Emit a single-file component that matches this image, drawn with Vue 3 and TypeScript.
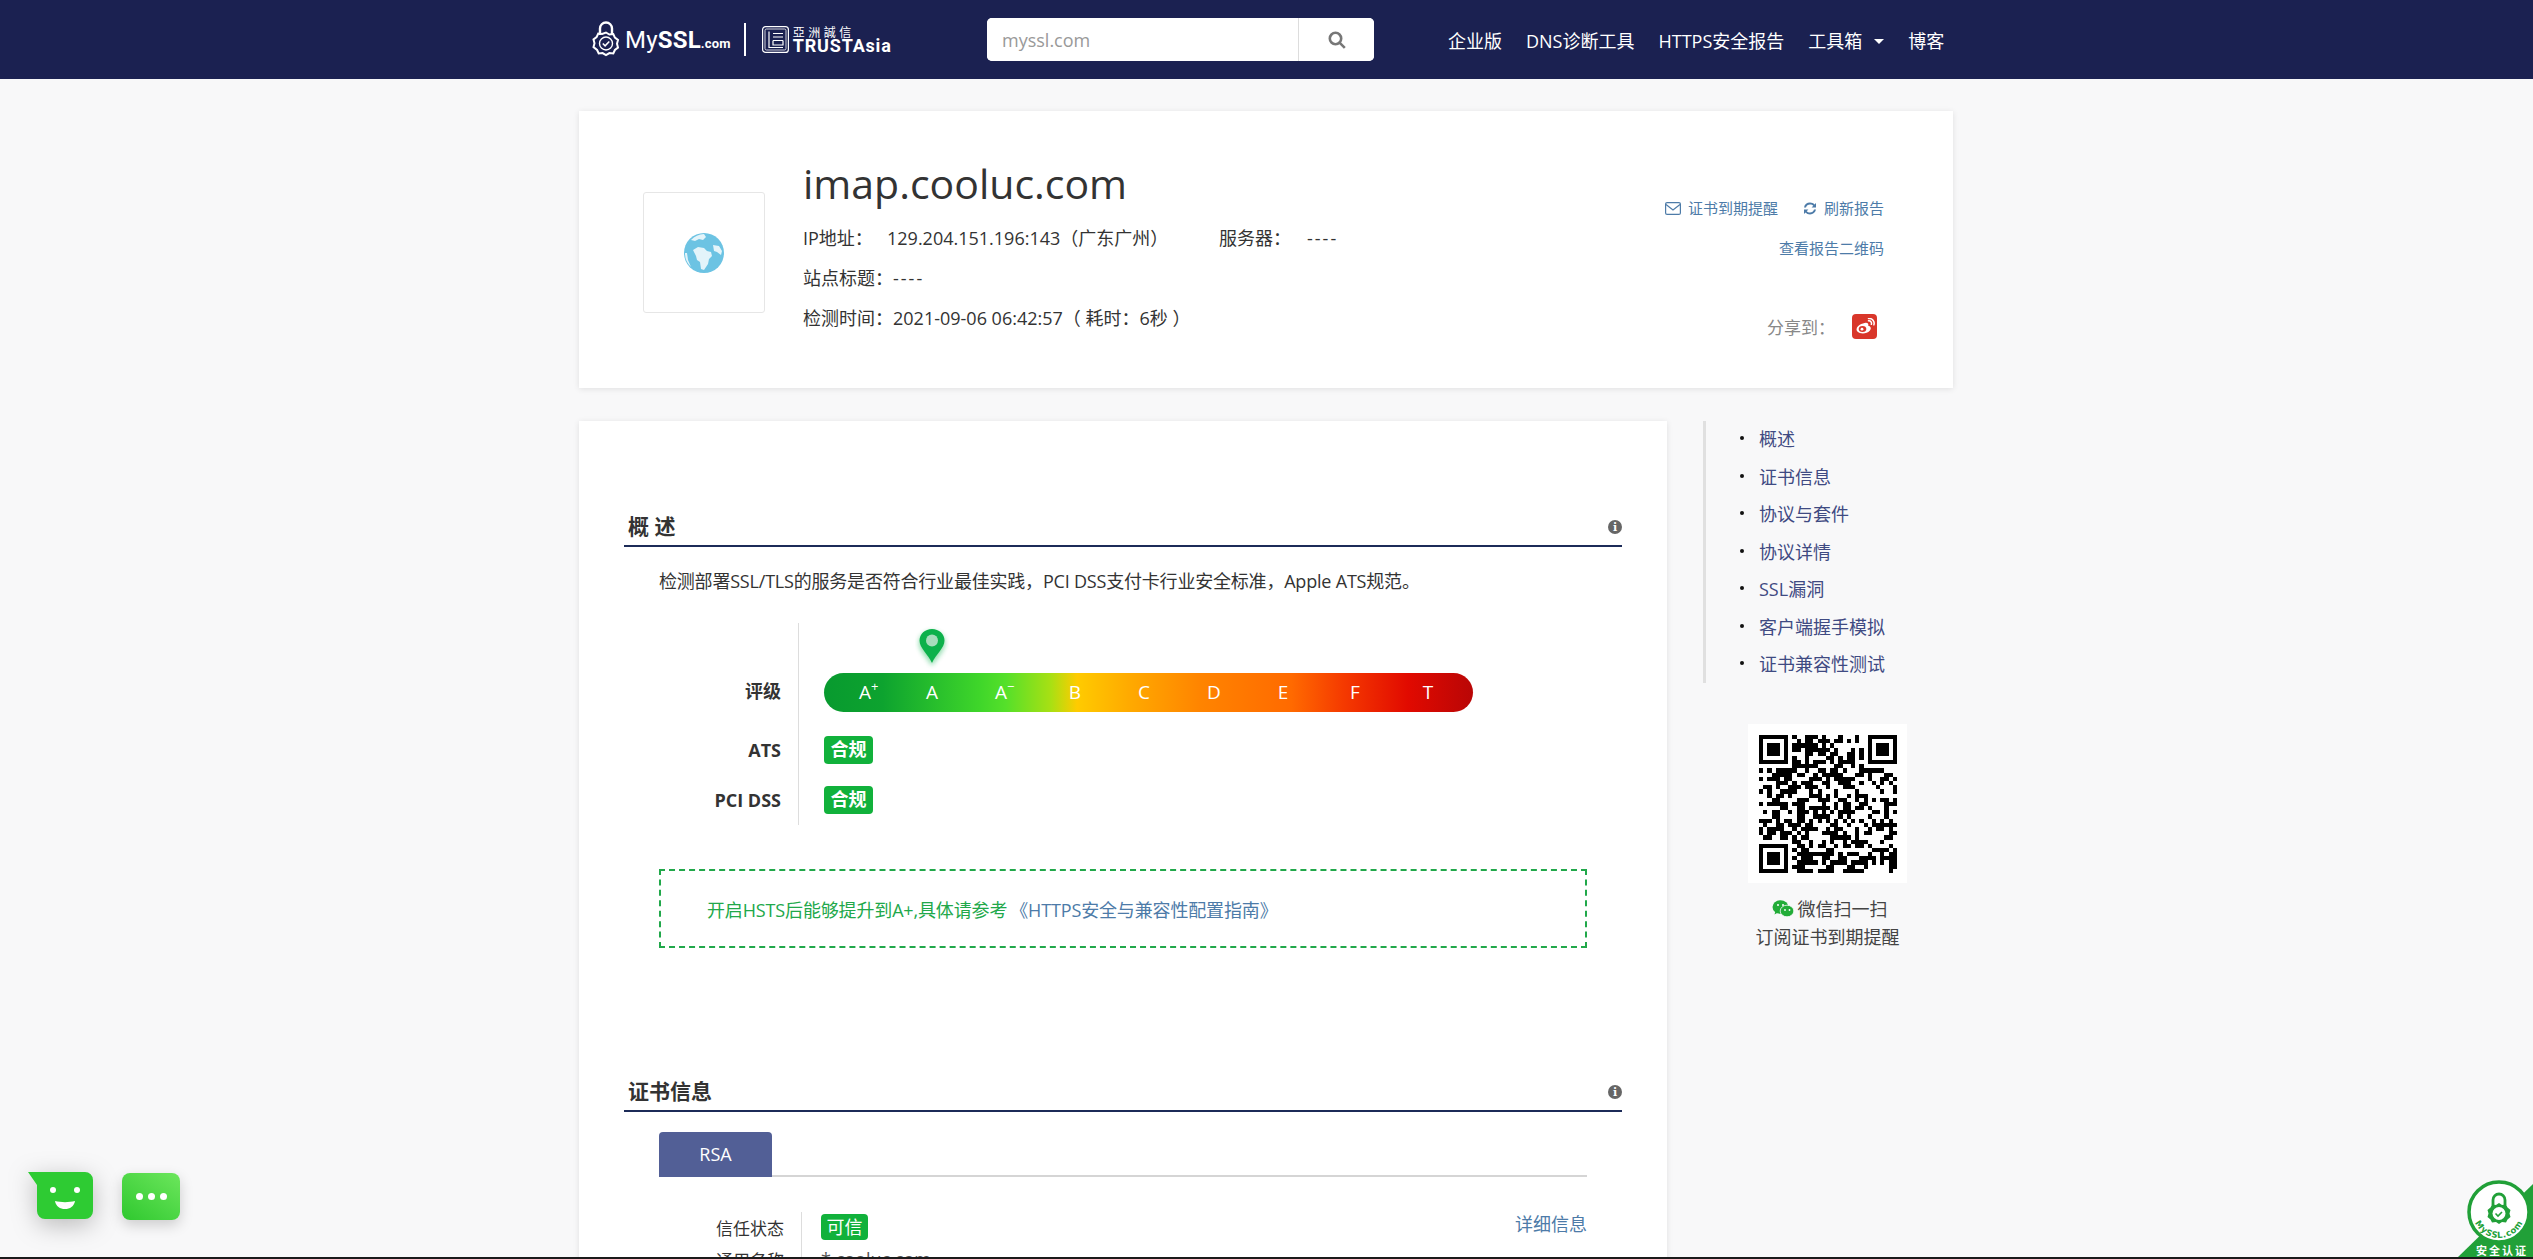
<script setup lang="ts">
import { computed } from 'vue'

const navItems = ['企业版', 'DNS诊断工具', 'HTTPS安全报告']
const sideItems = ['概述', '证书信息', '协议与套件', '协议详情', 'SSL漏洞', '客户端握手模拟', '证书兼容性测试']
const grades = [
  { label: 'A', sup: '+', x: 41 },
  { label: 'A', sup: '', x: 108 },
  { label: 'A', sup: '−', x: 177 },
  { label: 'B', sup: '', x: 251 },
  { label: 'C', sup: '', x: 320 },
  { label: 'D', sup: '', x: 390 },
  { label: 'E', sup: '', x: 459 },
  { label: 'F', sup: '', x: 531 },
  { label: 'T', sup: '', x: 604 }
]

// not the real code, just the same look: finder squares + seeded noise
const qrPath = computed(() => {
  const n = 33
  let seed = 20210906
  const next = () => {
    seed = (seed * 1103515245 + 12345) & 0x7fffffff
    return (seed >> 16) & 1
  }
  const inFinder = (x: number, y: number) =>
    (x < 8 && y < 8) || (x >= n - 8 && y < 8) || (x < 8 && y >= n - 8)
  let d = ''
  for (let y = 0; y < n; y++) {
    for (let x = 0; x < n; x++) {
      const on = next()
      if (!inFinder(x, y) && on) d += `M${x} ${y}h1v1h-1z`
    }
  }
  for (const [fx, fy] of [[0, 0], [n - 7, 0], [0, n - 7]]) {
    d += `M${fx} ${fy}h7v7h-7zM${fx + 1} ${fy + 1}v5h5v-5zM${fx + 2} ${fy + 2}h3v3h-3z`
  }
  return d
})
</script>

<template>
  <div class="page">
    <header class="topbar">
      <div class="topbar-inner">
        <a class="logo">
          <svg class="logo-lock" viewBox="0 0 28 37" fill="none" stroke="#fff">
            <path d="M8 14V7.5a6 6 0 0 1 12 0V14" stroke-width="2.4" />
            <path d="M14 11.5l3.4 2 3.9-.4 1.6 3.5 3.1 2.4-1 3.8 1 3.8-3.1 2.4-1.6 3.5-3.900-.4-3.400 2-3.400-2-3.900.4-1.600-3.500L1.500 26.100l1-3.800-1-3.800 3.100-2.400 1.600-3.500 3.900.4z" stroke-width="2" />
            <circle cx="14" cy="22.500" r="6.500" stroke-width="1.400" />
            <path d="M10.800 22.500l2.300 2.300 4.200-4.300" stroke-width="1.600" />
          </svg>
          <span class="logo-name">My<b>SSL</b><small>.com</small></span>
          <i class="logo-sep"></i>
          <svg class="logo-mark" viewBox="0 0 27 27" fill="none" stroke="#fff" stroke-width="1.200">
            <rect x="0.600" y="0.600" width="25.800" height="25.800" rx="3" />
            <rect x="3" y="3" width="21" height="21" rx="1.500" stroke-width="0.800" />
            <path d="M7 5.500v16h14M11 7.500h10M11 11h10M11 14.500h10M11 14.500v4.500h10v-4.500" />
          </svg>
          <span class="logo-ta">
            <span class="logo-ta-cn">亞洲誠信</span>
            <span class="logo-ta-en">TRUSTAsia</span>
          </span>
        </a>
        <form class="search" @submit.prevent>
          <input class="search-input" placeholder="myssl.com" />
          <button class="search-btn" type="button" aria-label="search">
            <svg width="18" height="18" viewBox="0 0 18 18" fill="none" stroke="#777" stroke-width="2.600">
              <circle cx="7.500" cy="7.500" r="5.700" />
              <path d="M11.800 11.800l5 5" />
            </svg>
          </button>
        </form>
        <nav class="nav">
          <a v-for="item in navItems" :key="item">{{ item }}</a>
          <a class="nav-drop">工具箱<i class="caret"></i></a>
          <a>博客</a>
        </nav>
      </div>
    </header>

    <div class="container">
      <section class="site-card">
        <div class="favicon">
          <svg width="40" height="40" viewBox="0 0 40 40">
            <circle cx="20" cy="20" r="20" fill="#6cc3e3" />
            <path d="M20 1a19 19 0 0 0-13 6l4 1 4-2 4 1 3-3zM9 17l5-3 6 1 3 3 4 1 1 4-3 3-1 5-4 6-3-1-1-7-3-2-1-4zM29 12l6 1 3 5-1 4-4-3-3-1zM1 20a19 19 0 0 0 6 14l-3-7-1-7z" fill="#e3f4fa" />
            <path d="M3 30a20 20 0 0 0 17 10 20 20 0 0 1-17-10z" fill="#fff" />
          </svg>
        </div>
        <div class="site-info">
          <h1 class="site-host">imap.cooluc.com</h1>
          <p class="site-row">
            <span class="w-ip">IP地址：</span><span class="w-addr">129.204.151.196:143（广东广州）</span><span class="w-srv">服务器：</span><span class="dash">----</span>
          </p>
          <p class="site-row"><span class="w-title">站点标题：</span><span class="dash">----</span></p>
          <p class="site-row"><span class="w-title">检测时间：</span><span>2021-09-06 06:42:57（ 耗时：6秒 ）</span></p>
        </div>
        <div class="site-actions">
          <div class="action-row">
            <a class="action">
              <svg width="16" height="13" viewBox="0 0 16 13" fill="none" stroke="#4d7ba8" stroke-width="1.200">
                <rect x="0.600" y="0.600" width="14.800" height="11.800" rx="1.500" />
                <path d="M1 2.500l7 5.500 7-5.500" />
              </svg>
              证书到期提醒
            </a>
            <a class="action">
              <svg width="14" height="13" viewBox="0 0 14 13" fill="#4d7ba8">
                <path d="M1 5.400C1.500 2.400 4 .5 7 .5c1.800 0 3.400.7 4.500 1.900L13 1v4.400H8.600l1.700-1.700C9.600 2.900 8.400 2.400 7 2.400c-2 0-3.500 1.200-4 3zM13 7.600c-.5 3-3 4.900-6 4.900-1.800 0-3.400-.7-4.500-1.900L1 12V7.600h4.400L3.700 9.300c.7.800 1.900 1.300 3.300 1.300 2 0 3.500-1.200 4-3z" />
              </svg>
              刷新报告
            </a>
          </div>
          <a class="action qr-link">查看报告二维码</a>
          <div class="share">
            <span>分享到：</span>
            <span class="weibo">
              <svg width="20" height="17" viewBox="0 0 20 17">
                <path d="M8 5.500c3.800-1.500 6-.2 5.200 2.300 3 .8 3.300 3 1.500 5C12.500 15.300 8 16 4.800 15 1.800 14 .8 11.800 2 9.500 3 7.700 5.500 6 8 5.500z" fill="#fff" />
                <ellipse cx="7.500" cy="11" rx="3.800" ry="2.900" fill="#d9362a" />
                <circle cx="7" cy="11.200" r="1.400" fill="#fff" />
                <path d="M13.500 2.800c2-.3 3.500 1.500 2.900 3.500M13.500.5c3.800-.5 6.500 2.800 5.400 6.300" fill="none" stroke="#fff" stroke-width="1.500" stroke-linecap="round" />
              </svg>
            </span>
          </div>
        </div>
      </section>

      <div class="columns">
        <main class="report">
          <div class="sec-head">
            <h2>概 述</h2>
            <i class="info-dot">i</i>
          </div>
          <p class="sec-desc">检测部署SSL/TLS的服务是否符合行业最佳实践，PCI DSS支付卡行业安全标准，Apple ATS规范。</p>

          <div class="grade-row grade-row-bar">
            <div class="grade-label">评级</div>
            <div class="grade-value">
              <div class="grade-bar">
                <span v-for="g in grades" :key="g.x" class="grade-tick" :style="{ left: g.x + 'px' }">{{ g.label }}<sup v-if="g.sup">{{ g.sup }}</sup></span>
                <svg class="grade-pin" width="34" height="46" viewBox="0 0 34 46">
                  <defs>
                    <filter id="pinGlow" x="-40%" y="-40%" width="180%" height="180%">
                      <feGaussianBlur stdDeviation="2.500" />
                    </filter>
                  </defs>
                  <path d="M17 7c7.500 0 13 5 13 12 0 8-8 14-13 23-5-9-13-15-13-23 0-7 5.500-12 13-12z" fill="#0db14b" opacity="0.45" filter="url(#pinGlow)" />
                  <path d="M17 5c7 0 12.500 5 12.500 11.500C29.500 24 21 30 17 39 13 30 4.500 24 4.500 16.500 4.500 10 10 5 17 5z" fill="#0db14b" />
                  <circle cx="17" cy="16.500" r="6" fill="#a8dcbc" />
                </svg>
              </div>
            </div>
          </div>
          <div class="grade-row grade-row-ats">
            <div class="grade-label">ATS</div>
            <div class="grade-value"><span class="pass">合规</span></div>
          </div>
          <div class="grade-row grade-row-pci">
            <div class="grade-label">PCI DSS</div>
            <div class="grade-value"><span class="pass">合规</span></div>
          </div>

          <div class="tip">
            <span>开启HSTS后能够提升到A+,具体请参考</span>
            <a>《HTTPS安全与兼容性配置指南》</a>
          </div>

          <div class="sec-head sec-head-cert">
            <h2>证书信息</h2>
            <i class="info-dot">i</i>
          </div>
          <div class="tabs"><span class="tab">RSA</span></div>
          <div class="cert-row">
            <div class="cert-label">信任状态</div>
            <div class="cert-value">
              <span class="trust">可信</span>
              <a class="cert-more">详细信息</a>
            </div>
          </div>
          <div class="cert-row">
            <div class="cert-label">通用名称</div>
            <div class="cert-value cert-name">*.cooluc.com</div>
          </div>
        </main>

        <aside class="side">
          <ul class="side-nav">
            <li v-for="item in sideItems" :key="item"><a>{{ item }}</a></li>
          </ul>
          <div class="qr-box">
            <svg width="138" height="138" viewBox="0 0 33 33" shape-rendering="crispEdges">
              <path :d="qrPath" fill="#000" fill-rule="evenodd" />
            </svg>
          </div>
          <p class="qr-line qr-line-first">
            <svg width="22" height="18" viewBox="0 0 22 18">
              <ellipse cx="8.500" cy="7" rx="8" ry="6.800" fill="#22ac38" />
              <path d="M3.500 11l-1 3.500L7 12z" fill="#22ac38" />
              <ellipse cx="15" cy="11" rx="6.800" ry="5.800" fill="#22ac38" stroke="#f8f8f9" stroke-width="0.800" />
              <circle cx="6" cy="5" r="1" fill="#fff" />
              <circle cx="11" cy="5" r="1" fill="#fff" />
              <circle cx="13" cy="10" r="0.900" fill="#fff" />
              <circle cx="17.500" cy="10" r="0.900" fill="#fff" />
            </svg>
            微信扫一扫
          </p>
          <p class="qr-line">订阅证书到期提醒</p>
        </aside>
      </div>
    </div>

    <button class="chat-smile" aria-label="chat">
      <svg width="66" height="48" viewBox="0 0 66 48">
        <path d="M0 0h57a8 8 0 0 1 8 8v31a8 8 0 0 1-8 8H17a8 8 0 0 1-8-8V13z" fill="#2ecb33" />
        <circle cx="25" cy="18" r="3" fill="#fff" />
        <circle cx="49" cy="18" r="3" fill="#fff" />
        <path d="M27 29c6 1.500 14 1.500 20 0-1 5.500-5 8-10 8s-9-2.500-10-8z" fill="#fff" />
      </svg>
    </button>
    <button class="chat-more" aria-label="more"><i></i><i></i><i></i></button>

    <div class="seal">
      <svg width="76" height="74" viewBox="0 0 76 74">
        <path d="M0 74 76 0v74z" fill="#21a038" />
        <circle cx="42" cy="28" r="30" fill="#fff" stroke="#21a038" stroke-width="3.500" />
        <path d="M36 21v-5a6 6 0 0 1 12 0v5" fill="none" stroke="#21a038" stroke-width="2.800" />
        <path d="M42 19l3 2 4-.4 1.500 3 3 2.400-1 3.500 1 3.500-3 2.400-1.500 3-4-.4-3 2-3-2-4 .4-1.500-3-3-2.400 1-3.500-1-3.500 3-2.400 1.500-3 4 .4z" fill="#21a038" />
        <circle cx="42" cy="29.500" r="6.500" fill="#fff" />
        <path d="M38.500 29.500l2.500 2.500 4-4" fill="none" stroke="#21a038" stroke-width="1.600" />
        <defs><path id="sealArc" d="M16 28a26 26 0 0 0 52 0" /></defs>
        <text class="seal-arc"><textPath href="#sealArc" startOffset="50%" text-anchor="middle">MySSL.com</textPath></text>
        <text class="seal-cn" x="45" y="71" text-anchor="middle">安全认证</text>
      </svg>
    </div>
    <i class="edge"></i>
  </div>
</template>

<style>
body {
  background: #f8f8f9;
}
</style>

<style scoped>
.page {
  position: relative;
  height: 1259px;
  overflow: hidden;
  background: #f8f8f9;
  color: #333;
  font-family: 'Open Sans', 'Noto Sans CJK SC', sans-serif;
  font-size: 18px;
}

.topbar {
  height: 79px;
  background: #1b2151;
}

.topbar-inner {
  display: flex;
  align-items: center;
  width: 1374px;
  height: 79px;
  margin-left: 579px;
}

.logo {
  display: flex;
  align-items: center;
  flex: none;
  width: 408px;
  padding-left: 13px;
  box-sizing: border-box;
  color: #fff;
}

.logo-lock {
  width: 28px;
  height: 37px;
}

.logo-name {
  margin-left: 5px;
  font-family: 'Roboto', sans-serif;
  font-size: 24px;
  letter-spacing: 0.2px;
}

.logo-name b {
  font-weight: 700;
}

.logo-name small {
  font-size: 13px;
  font-weight: 700;
}

.logo-sep {
  width: 2px;
  height: 33px;
  margin: 0 16px 0 13px;
  background: #fff;
}

.logo-mark {
  width: 27px;
  height: 27px;
}

.logo-ta {
  display: flex;
  flex-direction: column;
  margin-left: 4px;
  line-height: 1;
}

.logo-ta-cn {
  font-size: 12px;
  letter-spacing: 3.500px;
  line-height: 13px;
}

.logo-ta-en {
  font-family: 'Roboto', sans-serif;
  font-size: 18px;
  font-weight: 700;
  line-height: 14px;
  letter-spacing: 0.800px;
}

.search {
  display: flex;
  flex: none;
  width: 387px;
  height: 43px;
  margin-right: 74px;
  border-radius: 5px;
  overflow: hidden;
  background: #fff;
}

.search-input {
  flex: 1;
  min-width: 0;
  padding: 0 15px;
  border: 0;
  outline: 0;
  border-right: 1px solid #ddd;
  font: inherit;
  font-size: 18px;
  color: #333;
}

.search-input::placeholder {
  color: #999;
}

.search-btn {
  display: flex;
  align-items: center;
  justify-content: center;
  width: 75px;
  padding: 0;
  border: 0;
  background: #fff;
}

.nav {
  display: flex;
  align-items: center;
  gap: 24px;
  color: #fff;
  white-space: nowrap;
}

.nav-drop {
  display: flex;
  align-items: center;
}

.caret {
  width: 0;
  height: 0;
  margin-left: 12px;
  margin-top: 3px;
  border: 5px solid transparent;
  border-top-color: #fff;
  border-bottom: 0;
}

.container {
  width: 1374px;
  margin: 32px 0 0 579px;
}

.site-card {
  display: flex;
  height: 277px;
  background: #fff;
  box-shadow: 0 1px 6px rgba(0, 0, 0, 0.1);
}

.favicon {
  display: flex;
  align-items: center;
  justify-content: center;
  flex: none;
  width: 122px;
  height: 121px;
  margin: 81px 38px 0 64px;
  box-sizing: border-box;
  border: 1px solid #e6e6e6;
  border-radius: 3px;
}

.site-info {
  flex: 1;
  padding-top: 39px;
}

.site-host {
  margin: 0 0 2px;
  font-size: 41px;
  font-weight: 400;
  line-height: 66px;
  color: #333;
}

.site-row {
  margin: 0;
  line-height: 40px;
  white-space: nowrap;
}

.site-row span {
  display: inline-block;
}

.w-ip {
  width: 84px;
}

.w-addr {
  width: 332px;
}

.w-srv {
  width: 88px;
}

.w-title {
  width: 90px;
}

.dash {
  letter-spacing: 2px;
}

.site-actions {
  display: flex;
  flex-direction: column;
  align-items: flex-end;
  flex: none;
  padding: 82px 69px 0 0;
}

.action-row {
  display: flex;
  gap: 25px;
}

.action {
  display: flex;
  align-items: center;
  gap: 7px;
  font-size: 15px;
  line-height: 30px;
  color: #4d7ba8;
}

.qr-link {
  margin-top: 10px;
}

.share {
  display: flex;
  align-items: center;
  margin-top: 51px;
  margin-right: 7px;
  font-size: 17px;
  color: #888;
}

.weibo {
  display: flex;
  align-items: center;
  justify-content: center;
  width: 25px;
  height: 25px;
  margin-left: 17px;
  border-radius: 4px;
  background: #d9362a;
}

.columns {
  display: flex;
  margin-top: 33px;
}

.report {
  flex: none;
  width: 1088px;
  height: 900px;
  padding: 91px 45px 0;
  box-sizing: border-box;
  background: #fff;
  box-shadow: 0 1px 6px rgba(0, 0, 0, 0.1);
}

.sec-head {
  display: flex;
  align-items: center;
  justify-content: space-between;
  height: 30px;
  padding: 0 0 3px 4px;
  border-bottom: 2px solid #1c2b58;
}

.sec-head h2 {
  margin: 0 0 2px;
  font-size: 21px;
  font-weight: 700;
  line-height: 28px;
  color: #333;
}

.sec-head-cert {
  margin-top: 129px;
}

.info-dot {
  display: flex;
  align-items: center;
  justify-content: center;
  width: 14px;
  height: 14px;
  border-radius: 50%;
  background: #666;
  color: #fff;
  font-family: 'DejaVu Serif', serif;
  font-size: 11px;
  font-style: normal;
  font-weight: 700;
}

.sec-desc {
  margin: 19px 0 27px 35px;
  line-height: 30px;
  letter-spacing: -0.2px;
  white-space: nowrap;
}

.grade-row {
  display: grid;
  grid-template-columns: 174px 1fr;
}

.grade-label {
  padding-right: 17px;
  font-weight: 700;
  font-size: 18px;
  text-align: right;
  color: #333;
}

.grade-value {
  padding-left: 25px;
  border-left: 1px solid #ddd;
}

.grade-row-bar .grade-label {
  padding-top: 49px;
  line-height: 39px;
}

.grade-row-bar .grade-value {
  padding-top: 50px;
  padding-bottom: 24px;
}

.grade-row-ats .grade-label,
.grade-row-pci .grade-label {
  line-height: 28px;
}

.grade-row-ats .grade-value {
  padding-bottom: 22px;
}

.grade-row-pci .grade-value {
  padding-bottom: 11px;
}

.grade-bar {
  position: relative;
  width: 649px;
  height: 39px;
  border-radius: 20px;
  background: linear-gradient(90deg, #089a2f 0%, #0da32f 9%, #3fd62a 24%, #55e02a 28%, #a9e013 35%, #ffcb00 39%, #ffaa00 47%, #ff8400 58%, #ff6a00 72%, #f53a00 80%, #e10a00 90%, #b90606 100%);
}

.grade-tick {
  position: absolute;
  top: 0;
  transform: translateX(-50%);
  font-size: 19px;
  line-height: 39px;
  color: #fff;
}

.grade-tick sup {
  position: absolute;
  top: -6px;
  font-size: 13px;
  line-height: 39px;
}

.grade-pin {
  position: absolute;
  left: 91px;
  top: -49px;
}

.pass {
  display: block;
  width: 49px;
  height: 28px;
  border-radius: 4px;
  background: #11b13b;
  color: #fff;
  font-size: 18px;
  font-weight: 700;
  line-height: 27px;
  text-align: center;
}

.tip {
  display: flex;
  align-items: center;
  gap: 3px;
  width: 928px;
  height: 79px;
  margin: 44px 0 0 35px;
  padding-left: 46px;
  box-sizing: border-box;
  border: 2px dashed #21a84a;
  color: #21a84a;
  letter-spacing: -0.15px;
  white-space: nowrap;
}

.tip a {
  color: #4d7ba8;
}

.tabs {
  width: 928px;
  height: 43px;
  margin: 20px 0 0 35px;
  border-bottom: 2px solid #d5d5d5;
}

.tab {
  display: block;
  width: 113px;
  height: 45px;
  border-radius: 4px 4px 0 0;
  background: #525f96;
  color: #fff;
  line-height: 44px;
  text-align: center;
}

.cert-row {
  display: grid;
  grid-template-columns: 177px 786px;
  height: 32px;
}

.tabs + .cert-row {
  margin-top: 35px;
}

.cert-label {
  padding-right: 17px;
  padding-top: 2px;
  font-size: 17px;
  line-height: 30px;
  text-align: right;
  color: #333;
}

.cert-value {
  display: flex;
  align-items: flex-start;
  justify-content: space-between;
  padding-left: 19px;
  border-left: 1px solid #ddd;
}

.trust {
  width: 47px;
  height: 26px;
  margin-top: 2px;
  border-radius: 4px;
  background: #11b13b;
  color: #fff;
  line-height: 26px;
  text-align: center;
}

.cert-more {
  color: #4d7ba8;
  line-height: 24px;
}

.cert-name {
  color: #555;
  line-height: 30px;
}

.side {
  flex: none;
  width: 250px;
  margin-left: 36px;
}

.side-nav {
  margin: 0;
  padding: 0 0 0 34px;
  border-left: 3px solid #e0e0e0;
  list-style: none;
  height: 262px;
  box-sizing: border-box;
}

.side-nav li {
  position: relative;
  height: 37.500px;
  padding-left: 19px;
  color: #3f4a82;
  line-height: 37.500px;
}

.side-nav li::before {
  content: '';
  position: absolute;
  left: 0;
  top: 15px;
  width: 4px;
  height: 4px;
  border-radius: 50%;
  background: #111;
}

.qr-box {
  display: flex;
  align-items: center;
  justify-content: center;
  width: 159px;
  height: 159px;
  margin: 41px 0 0 45px;
  background: #fff;
}

.qr-line {
  display: flex;
  align-items: center;
  justify-content: center;
  gap: 4px;
  width: 159px;
  margin: 0 0 0 45px;
  line-height: 28px;
  color: #444;
  white-space: nowrap;
}

.qr-line-first {
  margin-top: 12px;
  padding-left: 4px;
  box-sizing: border-box;
}

.chat-smile {
  position: absolute;
  left: 28px;
  top: 1172px;
  width: 66px;
  height: 48px;
  padding: 0;
  border: 0;
  background: none;
  filter: drop-shadow(0 6px 12px rgba(0, 0, 0, 0.25));
}

.chat-more {
  position: absolute;
  left: 122px;
  top: 1173px;
  display: flex;
  align-items: center;
  justify-content: center;
  gap: 5px;
  width: 58px;
  height: 47px;
  padding: 0;
  border: 0;
  border-radius: 8px;
  background: linear-gradient(215deg, #6ce65c, #2fc82f);
  box-shadow: 0 5px 14px rgba(0, 0, 0, 0.18);
}

.chat-more i {
  width: 7px;
  height: 7px;
  border-radius: 50%;
  background: #fff;
}

.seal {
  position: absolute;
  right: 0;
  top: 1184px;
  width: 76px;
  height: 74px;
}

.seal svg {
  display: block;
  overflow: visible;
}

.seal-arc {
  font-family: 'DejaVu Sans', sans-serif;
  font-size: 8.500px;
  font-weight: 700;
  fill: #21a038;
  letter-spacing: 0.600px;
}

.seal-cn {
  font-family: 'Noto Sans CJK SC', sans-serif;
  font-size: 11px;
  font-weight: 700;
  fill: #fff;
  letter-spacing: 2px;
}

.edge {
  position: absolute;
  left: 0;
  right: 0;
  bottom: 0;
  height: 2px;
  background: #1a1a1a;
}
</style>
